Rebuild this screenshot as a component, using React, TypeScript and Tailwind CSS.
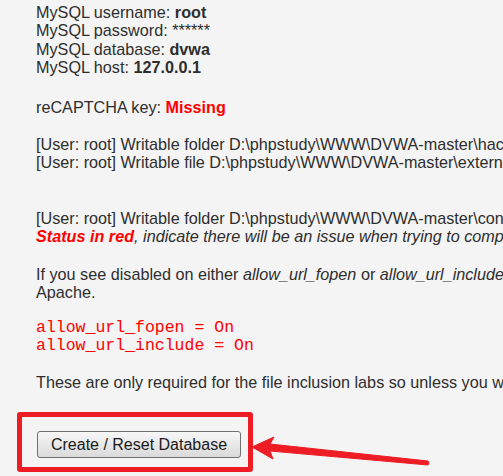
export default function App() {
  const line = 'h-[18.3px] leading-[18.3px] whitespace-nowrap'
  return (
    <div className="relative w-[503px] h-[476px] overflow-hidden bg-[#f4f4f4] text-[#2e2e2e] font-['Liberation_Sans',Arial,sans-serif] text-[16.2px]">
      <div className="pl-[36px] pt-[3px]">
        <div className={line}>MySQL username: <b>root</b></div>
        <div className={line}>MySQL password: ******</div>
        <div className={line}>MySQL database: <b>dvwa</b></div>
        <div className={line}>MySQL host: <b>127.0.0.1</b></div>

        <div className={`${line} mt-[21.7px]`}>
          reCAPTCHA key: <span className="font-bold text-[#ff0000]">Missing</span>
        </div>

        <div className={`${line} mt-[18.4px]`}>[User: root] Writable folder D:\phpstudy\WWW\DVWA-master\hackable\uploads\ is correct</div>
        <div className={line}>[User: root] Writable file D:\phpstudy\WWW\DVWA-master\external\phpids\0.6\lib\IDS\tmp\phpids_log.txt</div>

        <div className={`${line} mt-[37.7px]`}>[User: root] Writable folder D:\phpstudy\WWW\DVWA-master\config is correct</div>
        <div className={`${line} italic`}>
          <span className="font-bold text-[#ff0000]">Status in red</span>, indicate there will be an issue when trying to complete some modules.
        </div>

        <div className={`${line} mt-[19.4px]`}>
          If you see disabled on either <i>allow_url_fopen</i> or <i>allow_url_include</i>, set the following in your php.ini file and restart
        </div>
        <div className={line}>Apache.</div>

        <div className={`${line} mt-[17.4px] font-['Liberation_Mono','Courier_New',monospace] text-[16.5px] text-[#ff0000]`}>allow_url_fopen = On</div>
        <div className={`${line} font-['Liberation_Mono','Courier_New',monospace] text-[16.5px] text-[#ff0000]`}>allow_url_include = On</div>

        <div className={`${line} mt-[17.4px]`}>These are only required for the file inclusion labs so unless you want to play with those, you do not need them.</div>
      </div>

      <div className="ml-[17px] mt-[21px] w-[236px] h-[60px] border-[5px] border-[#ee1c25] rounded-[3px] pl-[15px] pt-[14px]">
        <button className="h-[27px] w-[204px] rounded-[3px] border border-[#707070] bg-gradient-to-b from-[#f7f7f7] to-[#dadada] text-[16px] leading-[25px] text-[#1a1a1a] font-['Liberation_Sans',Arial,sans-serif]">
          Create / Reset Database
        </button>
      </div>

      <svg className="absolute left-0 top-0" width="503" height="476" viewBox="0 0 503 476">
        <polygon
          points="252,447 274,437 270,444 428,461 429,463 428,465 270,451 273,459"
          fill="#ee1c25"
          stroke="#ee1c25"
          strokeWidth="1"
          strokeLinejoin="round"
        />
      </svg>
    </div>
  )
}
